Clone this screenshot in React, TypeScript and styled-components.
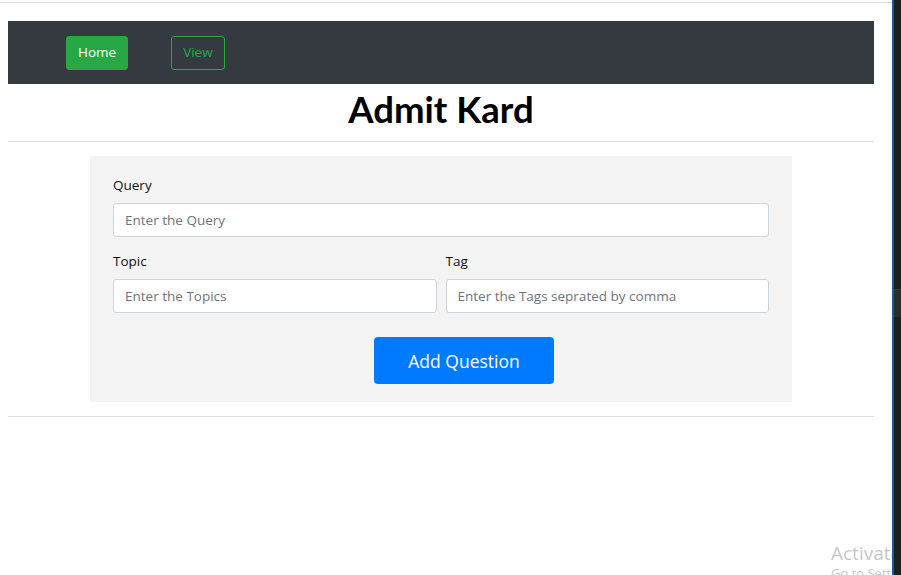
import styled, { createGlobalStyle } from "styled-components";

const GlobalStyle = createGlobalStyle`
  html, body {
    margin: 0;
    padding: 0;
    background: #ffffff;
    font-family: "Open Sans", "Noto Sans", sans-serif;
    color: #212529;
  }
  * {
    box-sizing: border-box;
  }
`;

const App = () => (
  <>
    <GlobalStyle />
    <Screen>
      <Page>
        <TopRule />
        <Container>
          <NavBar>
            <NavButton $variant="solid">Home</NavButton>
            <NavButton $variant="outline">View</NavButton>
          </NavBar>
          <Title>Admit Kard</Title>
          <Divider />
          <FormCard>
            <Field>
              <Label>Query</Label>
              <Input placeholder="Enter the Query" />
            </Field>
            <Row>
              <Field>
                <Label>Topic</Label>
                <Input placeholder="Enter the Topics" />
              </Field>
              <Field>
                <Label>Tag</Label>
                <Input placeholder="Enter the Tags seprated by comma" />
              </Field>
            </Row>
            <Actions>
              <SubmitButton>Add Question</SubmitButton>
            </Actions>
          </FormCard>
          <Divider $bottom />
        </Container>
        <Watermark>
          <span>Activate Windows</span>
          <small>Go to Settings to activate Windows.</small>
        </Watermark>
      </Page>
      <SideWindow>
        <SideTab />
      </SideWindow>
    </Screen>
  </>
);

export default App;

const Screen = styled.div`
  display: flex;
  width: 901px;
  height: 575px;
  overflow: hidden;
`;

const Page = styled.main`
  position: relative;
  flex: 0 0 892px;
  background: #ffffff;
  overflow: hidden;
`;

const TopRule = styled.div`
  height: 3px;
  border-bottom: 1px solid #dcdcdc;
`;

const Container = styled.div`
  width: 866px;
  margin: 18px 0 0 8px;
  display: flex;
  flex-direction: column;
`;

const NavBar = styled.nav`
  height: 63px;
  background: #343a40;
  display: flex;
  align-items: center;
  gap: 43px;
  padding-left: 58px;
`;

const NavButton = styled.button<{ $variant: "solid" | "outline" }>`
  height: 34px;
  padding: 1px 11px 0;
  border-radius: 3px;
  font-family: inherit;
  font-size: 13.5px;
  line-height: 1;
  cursor: pointer;
  border: 1px solid #28a745;
  background: ${({ $variant }) => ($variant === "solid" ? "#28a745" : "transparent")};
  color: ${({ $variant }) => ($variant === "solid" ? "#ffffff" : "#28a745")};
`;

const Title = styled.h1`
  margin: 0;
  height: 56px;
  display: flex;
  align-items: center;
  justify-content: center;
  padding-bottom: 7px;
  font-family: Lato, "Open Sans", sans-serif;
  font-size: 36.5px;
  font-weight: 700;
  color: #000000;
`;

const Divider = styled.hr<{ $bottom?: boolean }>`
  margin: ${({ $bottom }) => ($bottom ? "14px 0 0" : "1px 0 14px")};
  border: 0;
  border-top: 1px solid #dedede;
`;

const FormCard = styled.form`
  width: 702px;
  align-self: center;
  background: #f4f4f4;
  padding: 20px 23px 18px;
  display: flex;
  flex-direction: column;
  gap: 15px;
`;

const Row = styled.div`
  display: grid;
  grid-template-columns: 1fr 1fr;
  gap: 9px;
`;

const Field = styled.div`
  display: flex;
  flex-direction: column;
`;

const Label = styled.label`
  font-size: 13.5px;
  line-height: 18px;
  margin-bottom: 9px;
  color: #111111;
`;

const Input = styled.input`
  height: 34px;
  width: 100%;
  border: 1px solid #ced4da;
  border-radius: 3px;
  background: #ffffff;
  padding: 0 11px;
  font-family: inherit;
  font-size: 13.5px;
  color: #495057;
  &::placeholder {
    color: #6c757d;
  }
`;

const Actions = styled.div`
  display: flex;
  justify-content: center;
  padding-left: 46px;
  margin-top: 9px;
`;

const SubmitButton = styled.button`
  width: 180px;
  height: 47px;
  border: 0;
  border-radius: 4px;
  background: #007bff;
  color: #ffffff;
  font-family: inherit;
  font-size: 17.5px;
  cursor: pointer;
`;

const Watermark = styled.div`
  position: absolute;
  left: 831px;
  top: 541px;
  display: flex;
  flex-direction: column;
  white-space: nowrap;
  color: #c8c8c8;
  span {
    font-size: 19px;
    line-height: 24px;
  }
  small {
    font-size: 13px;
    line-height: 16px;
  }
`;

const SideWindow = styled.aside`
  flex: 1;
  background: #1f1f1f;
  border-left: 2px solid #1c5a9a;
  padding-top: 289px;
`;

const SideTab = styled.div`
  height: 28px;
  background: #2c2c2c;
  border-top: 1px solid #3c3c3c;
`;
